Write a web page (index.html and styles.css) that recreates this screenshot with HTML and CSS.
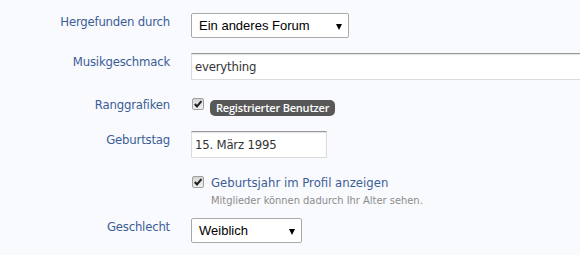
FILE: index.html
```html
<!DOCTYPE html>
<html lang="de">
<head>
    <meta charset="UTF-8">
    <title>Persönliche Details</title>
    <link rel="stylesheet" href="styles.css">
</head>
<body>

    <div class="form">
        <div class="ctrl-unit">
            <div class="label">Hergefunden durch</div>
            <div class="control">
                <div class="select select-wide">Ein anderes Forum<span class="arrow"></span></div>
            </div>
        </div>

        <div class="ctrl-unit unit-text">
            <div class="label">Musikgeschmack</div>
            <div class="control">
                <div class="text-ctrl text-full">everything</div>
            </div>
        </div>

        <div class="ctrl-unit unit-check">
            <div class="label">Ranggrafiken</div>
            <div class="control check-line">
                <span class="checkbox"><svg viewBox="0 0 12 12" width="12" height="12"><path d="M2.8 6 L5 8.4 L9.4 3.2" fill="none" stroke="#1e1e1e" stroke-width="2"/></svg></span>
                <span class="badge">Registrierter Benutzer</span>
            </div>
        </div>

        <div class="ctrl-unit unit-date">
            <div class="label">Geburtstag</div>
            <div class="control">
                <div class="text-ctrl text-date">15. März 1995</div>
            </div>
        </div>

        <div class="ctrl-unit unit-option">
            <div class="label"></div>
            <div class="control">
                <div class="check-line">
                    <span class="checkbox"><svg viewBox="0 0 12 12" width="12" height="12"><path d="M2.8 6 L5 8.4 L9.4 3.2" fill="none" stroke="#1e1e1e" stroke-width="2"/></svg></span>
                    <span class="option-label">Geburtsjahr im Profil anzeigen</span>
                </div>
                <p class="hint">Mitglieder können dadurch Ihr Alter sehen.</p>
            </div>
        </div>

        <div class="ctrl-unit unit-gender">
            <div class="label">Geschlecht</div>
            <div class="control">
                <div class="select select-small">Weiblich<span class="arrow"></span></div>
            </div>
        </div>
    </div>

</body>
</html>
```

FILE: styles.css
```css
body {
    margin: 0;
    padding: 0;
    background-color: #f8fafd;
    font-family: "DejaVu Sans Condensed", "Open Sans", Arial, sans-serif;
    font-size: 13px;
    overflow: hidden;
}

.form {
    padding-top: 13px;
}

.ctrl-unit {
    display: flex;
    align-items: flex-start;
}

.unit-text {
    margin-top: 15px;
}

.unit-check {
    margin-top: 16px;
}

.unit-date {
    margin-top: 15px;
}

.unit-option {
    margin-top: 16px;
}

.unit-gender {
    margin-top: 10px;
}

.label {
    width: 170px;
    flex-shrink: 0;
    margin-right: 21px;
    text-align: right;
    line-height: 18px;
    letter-spacing: -0.2px;
    color: #3d5d97; /* label blue */
}

.control {
    flex: 1;
    min-width: 0;
}

.select {
    position: relative;
    box-sizing: border-box;
    height: 25px;
    padding: 0 0 0 7px;
    border: 1px solid #a9a9a9;
    border-radius: 2px;
    background-color: #fff;
    font-family: "Liberation Sans", Arial, sans-serif;
    font-size: 13px;
    line-height: 23px;
    color: #000;
}

.select-wide {
    width: 158px;
}

.select-small {
    width: 111px;
}

.arrow {
    position: absolute;
    right: 6px;
    top: 10px;
    width: 0;
    height: 0;
    border-left: 3px solid transparent;
    border-right: 3px solid transparent;
    border-top: 6px solid #000;
}

.text-ctrl {
    box-sizing: border-box;
    height: 27px;
    padding: 0 3px;
    border: 1px solid #dcdcdc;
    border-top-color: #999;
    box-shadow: inset 0 1px 1px rgba(0, 0, 0, 0.12);
    background-color: #fff;
    line-height: 26px;
    letter-spacing: -0.2px;
    color: #333;
}

.text-full {
    margin-right: -10px;
}

.text-date {
    width: 136px;
}

.check-line {
    display: flex;
    align-items: flex-start;
}

.checkbox {
    display: inline-block;
    box-sizing: border-box;
    width: 12px;
    height: 12px;
    margin: 2px 6px 0 1px;
    border: 1px solid #a0a0a0;
    border-radius: 2px;
    background: linear-gradient(#d6d6d6, #f0f0f0);
}

.checkbox svg {
    display: block;
    margin: -1px;
}

.badge {
    margin-top: 4px;
    padding: 0 6px;
    border-radius: 5px;
    background-color: #585858;
    color: #fff;
    font-family: "Open Sans", Arial, sans-serif;
    font-size: 11px;
    font-weight: 600;
    letter-spacing: -0.2px;
    line-height: 16px;
}

.option-label {
    margin-left: 1px;
    line-height: 18px;
    color: #3d5d97;
}

.hint {
    margin: 2px 0 0 20px;
    font-size: 11px;
    line-height: 14px;
    color: #8c8c8c;
}
```
